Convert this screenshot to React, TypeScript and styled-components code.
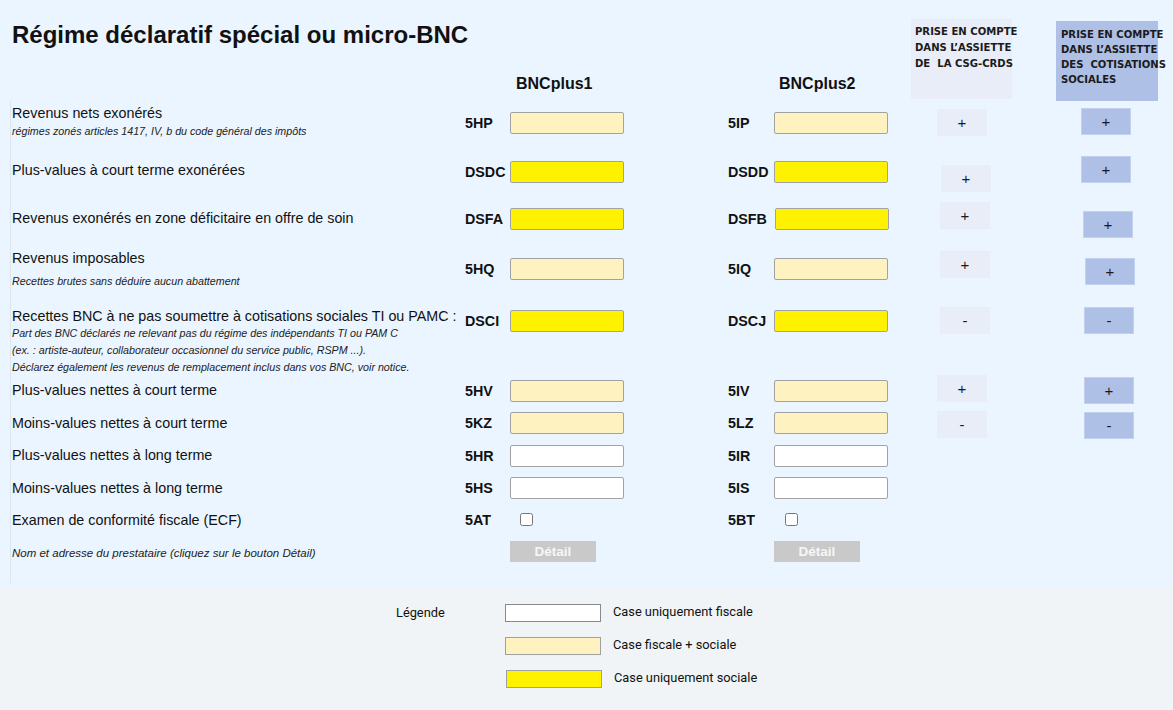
import React from 'react'
import styled, { createGlobalStyle } from 'styled-components'

type Kind = 'f' | 'fs' | 's'
type Tone = 'csg' | 'soc'

const COLS = '453px 45px 116px 102px 46px 116px 21px 101px 44px 102px'

const fill: Record<Kind, string> = { f: '#ffffff', fs: '#fff2c1', s: '#fff200' }
const tone: Record<Tone, { bg: string; edge: string }> = {
  csg: { bg: '#e8edf8', edge: '#e8edf8' },
  soc: { bg: '#aec0e6', edge: '#c3d0ee' },
}

const GlobalStyle = createGlobalStyle`
  body {
    margin: 0;
    background: #f0f4f6;
    font-family: 'Liberation Sans', Arial, sans-serif;
    color: #111;
  }
`

const Page = styled.div`
  width: 1173px;
  height: 710px;
  display: flex;
  flex-direction: column;
  overflow: hidden;
`

const Panel = styled.section`
  background: #ebf5ff;
  padding: 0 0 5px 10px;
`

const Header = styled.div`
  display: grid;
  grid-template-columns: ${COLS};
  grid-template-rows: 49px 52px;
  padding-left: 2px;
`

const Title = styled.h1`
  grid-column: 1 / 8;
  grid-row: 1;
  margin: 21px 0 0;
  font-size: 24px;
  line-height: 28px;
  font-weight: bold;
  white-space: nowrap;
`

const Year = styled.div<{ $col: string }>`
  grid-column: ${(p) => p.$col};
  grid-row: 2;
  margin-top: 25px;
  padding-left: 51px;
  font-size: 16px;
  line-height: 20px;
  font-weight: bold;
`

const ColumnHead = styled.div<{ $tone: Tone }>`
  grid-row: 1 / 3;
  grid-column: ${(p) => (p.$tone === 'csg' ? 8 : 10)};
  margin-top: ${(p) => (p.$tone === 'csg' ? 19 : 21)}px;
  height: 80px;
  box-sizing: border-box;
  padding: ${(p) => (p.$tone === 'csg' ? '5px 0 0 4px' : '6px 0 0 5px')};
  background: ${(p) => tone[p.$tone].bg};
  font-family: 'DejaVu Sans Condensed', 'Liberation Sans', sans-serif;
  font-weight: bold;
  font-size: 11.2px;
  line-height: ${(p) => (p.$tone === 'csg' ? 16 : 15)}px;
  white-space: pre;
  color: #1b1b1b;
`

const Body = styled.div`
  border-left: 1px solid #dce6f1;
  padding: 3px 0 0 1px;
`

const Row = styled.div<{ $h: number }>`
  display: grid;
  grid-template-columns: ${COLS};
  grid-template-rows: ${(p) => p.$h}px;
  height: ${(p) => p.$h}px;
  align-items: start;

  & > * {
    grid-row: 1;
  }
`

const LabelCell = styled.div<{ $pad: number }>`
  grid-column: 1;
  padding-top: ${(p) => p.$pad}px;
  white-space: nowrap;
`

const Label = styled.div`
  font-size: 14.3px;
  line-height: 18px;
`

const Notes = styled.div<{ $lh: number; $mt: number }>`
  margin-top: ${(p) => p.$mt}px;
  font-size: 10.7px;
  font-style: italic;
  line-height: ${(p) => p.$lh}px;
  color: #222;
`

const Hint = styled.div`
  font-size: 11.5px;
  font-style: italic;
  line-height: 18px;
  color: #222;
`

const Code = styled.div<{ $col: number; $top: number }>`
  grid-column: ${(p) => p.$col};
  margin-top: ${(p) => p.$top}px;
  height: 22px;
  line-height: 22px;
  font-size: 14.3px;
  font-weight: bold;
`

const Field = styled.input<{ $kind: Kind; $col: number; $top: number; $dx?: number }>`
  grid-column: ${(p) => p.$col};
  margin: ${(p) => p.$top}px 0 0 ${(p) => p.$dx ?? 0}px;
  box-sizing: border-box;
  width: 114px;
  height: 22px;
  padding: 0 4px;
  border: 1px solid #a2a2a2;
  border-radius: 2px;
  background: ${(p) => fill[p.$kind]};
  font: 13px 'Liberation Sans', Arial, sans-serif;
  outline: none;
`

const Check = styled.input<{ $col: number; $left: number; $top: number }>`
  grid-column: ${(p) => p.$col};
  margin: ${(p) => p.$top}px 0 0 ${(p) => p.$left}px;
  width: 13px;
  height: 13px;
`

const DetailButton = styled.button<{ $col: number }>`
  grid-column: ${(p) => p.$col};
  width: 86px;
  height: 21px;
  padding: 0;
  border: none;
  background: #c9c9c9;
  color: #f6f6f6;
  font: bold 13.5px 'Liberation Sans', Arial, sans-serif;
`

const Toggle = styled.div<{ $tone: Tone; $dx: number; $dy: number }>`
  grid-column: ${(p) => (p.$tone === 'csg' ? 8 : 10)};
  margin: ${(p) => p.$dy}px 0 0 ${(p) => p.$dx}px;
  width: 50px;
  height: 27px;
  box-sizing: border-box;
  display: flex;
  align-items: center;
  justify-content: center;
  background: ${(p) => tone[p.$tone].bg};
  border: 1px solid ${(p) => tone[p.$tone].edge};
  font-size: 15px;
  color: #1a1a1a;
`

const Legend = styled.section`
  flex: 1;
  display: flex;
  align-items: flex-start;
  padding: 16px 0 0 396px;
  font-family: Roboto, 'Liberation Sans', sans-serif;
  font-size: 12.8px;
  color: #111;
`

const LegendTitle = styled.div`
  width: 109px;
  line-height: 17px;
`

const LegendList = styled.div`
  display: grid;
  row-gap: 15px;
`

const LegendItem = styled.div<{ $shift: number }>`
  display: flex;
  align-items: center;
  gap: 12px;
  height: 18px;
  padding-left: ${(p) => p.$shift}px;
  line-height: 16px;

  & > span {
    margin-top: -2px;
  }
`

const Swatch = styled.div<{ $kind: Kind }>`
  width: 96px;
  height: 18px;
  box-sizing: border-box;
  border: 1px solid ${(p) => (p.$kind === 'f' ? '#8a8a8a' : '#a0a0a0')};
  background: ${(p) => fill[p.$kind]};
`

interface Sign {
  s: string
  dx: number
  dy: number
}

interface Line {
  label?: string
  hint?: string
  notes?: string[]
  noteLh?: number
  noteMt?: number
  h: number
  pad: number
  at: number
  codes?: [string, string]
  kind?: Kind
  shift2?: number
  control?: 'field' | 'check' | 'detail'
  csg?: Sign
  soc?: Sign
}

const lines: Line[] = [
  {
    label: 'Revenus nets exonérés',
    notes: ['régimes zonés articles 1417, IV, b du code général des impôts'],
    noteLh: 18,
    h: 57, pad: 0, at: 8, codes: ['5HP', '5IP'], kind: 'fs',
    csg: { s: '+', dx: 26, dy: 5 }, soc: { s: '+', dx: 25, dy: 4 },
  },
  {
    label: 'Plus-values à court terme exonérées',
    h: 47, pad: 0, at: 0, codes: ['DSDC', 'DSDD'], kind: 's',
    csg: { s: '+', dx: 30, dy: 4 }, soc: { s: '+', dx: 25, dy: -5 },
  },
  {
    label: 'Revenus exonérés en zone déficitaire en offre de soin',
    h: 41, pad: 1, at: 0, codes: ['DSFA', 'DSFB'], kind: 's', shift2: 1,
    csg: { s: '+', dx: 29, dy: -6 }, soc: { s: '+', dx: 27, dy: 3 },
  },
  {
    label: 'Revenus imposables',
    notes: ['Recettes brutes sans déduire aucun abattement'],
    noteLh: 18, noteMt: 5,
    h: 58, pad: 0, at: 9, codes: ['5HQ', '5IQ'], kind: 'fs',
    csg: { s: '+', dx: 29, dy: 2 }, soc: { s: '+', dx: 29, dy: 9 },
  },
  {
    label: 'Recettes BNC à ne pas soumettre à cotisations sociales TI ou PAMC :',
    notes: [
      'Part des BNC déclarés ne relevant pas du régime des indépendants TI ou PAM C',
      '(ex. : artiste-auteur, collaborateur occasionnel du service public, RSPM ...).',
      'Déclarez également les revenus de remplacement inclus dans vos BNC, voir notice.',
    ],
    noteLh: 17,
    h: 73, pad: 0, at: 3, codes: ['DSCI', 'DSCJ'], kind: 's',
    csg: { s: '-', dx: 29, dy: 0 }, soc: { s: '-', dx: 28, dy: 0 },
  },
  {
    label: 'Plus-values nettes à court terme',
    h: 32, pad: 1, at: 0, codes: ['5HV', '5IV'], kind: 'fs',
    csg: { s: '+', dx: 26, dy: -5 }, soc: { s: '+', dx: 28, dy: -3 },
  },
  {
    label: 'Moins-values nettes à court terme',
    h: 33, pad: 2, at: 0, codes: ['5KZ', '5LZ'], kind: 'fs',
    csg: { s: '-', dx: 26, dy: -1 }, soc: { s: '-', dx: 28, dy: 0 },
  },
  { label: 'Plus-values nettes à long terme', h: 32, pad: 1, at: 0, codes: ['5HR', '5IR'], kind: 'f' },
  { label: 'Moins-values nettes à long terme', h: 32, pad: 2, at: 0, codes: ['5HS', '5IS'], kind: 'f' },
  { label: 'Examen de conformité fiscale (ECF)', h: 32, pad: 2, at: 0, codes: ['5AT', '5BT'], control: 'check' },
  { hint: 'Nom et adresse du prestataire (cliquez sur le bouton Détail)', h: 42, pad: 3, at: 0, control: 'detail' },
]

function FormLine({ line }: { line: Line }) {
  const control = line.control ?? 'field'
  return (
    <Row $h={line.h}>
      <LabelCell $pad={line.pad}>
        {line.label && <Label>{line.label}</Label>}
        {line.hint && <Hint>{line.hint}</Hint>}
        {line.notes && (
          <Notes $lh={line.noteLh ?? 17} $mt={line.noteMt ?? 0}>
            {line.notes.map((n) => (
              <div key={n}>{n}</div>
            ))}
          </Notes>
        )}
      </LabelCell>
      {line.codes &&
        line.codes.map((c, i) => (
          <Code key={c} $col={i === 0 ? 2 : 5} $top={line.at}>
            {c}
          </Code>
        ))}
      {control === 'field' &&
        [3, 6].map((col) => (
          <Field
            key={col}
            $col={col}
            $top={line.at}
            $dx={col === 6 ? line.shift2 : 0}
            $kind={line.kind ?? 'f'}
            type="text"
          />
        ))}
      {control === 'check' &&
        [3, 6].map((col) => (
          <Check key={col} type="checkbox" $col={col} $left={col === 3 ? 10 : 11} $top={4} />
        ))}
      {control === 'detail' &&
        [3, 6].map((col) => (
          <DetailButton key={col} $col={col} type="button">
            Détail
          </DetailButton>
        ))}
      {line.csg && (
        <Toggle $tone="csg" $dx={line.csg.dx} $dy={line.csg.dy}>
          {line.csg.s}
        </Toggle>
      )}
      {line.soc && (
        <Toggle $tone="soc" $dx={line.soc.dx} $dy={line.soc.dy}>
          {line.soc.s}
        </Toggle>
      )}
    </Row>
  )
}

const legend: { kind: Kind; text: string; shift: number }[] = [
  { kind: 'f', text: 'Case uniquement fiscale', shift: 0 },
  { kind: 'fs', text: 'Case fiscale + sociale', shift: 0 },
  { kind: 's', text: 'Case uniquement sociale', shift: 1 },
]

export default function App() {
  return (
    <Page>
      <GlobalStyle />
      <Panel>
        <Header>
          <Title>Régime déclaratif spécial ou micro-BNC</Title>
          <Year $col="2 / 4">BNCplus1</Year>
          <Year $col="5 / 7">BNCplus2</Year>
          <ColumnHead $tone="csg">{'PRISE EN COMPTE\nDANS L’ASSIETTE\nDE  LA CSG-CRDS'}</ColumnHead>
          <ColumnHead $tone="soc">{'PRISE EN COMPTE\nDANS L’ASSIETTE\nDES  COTISATIONS\nSOCIALES'}</ColumnHead>
        </Header>
        <Body>
          {lines.map((l, i) => (
            <FormLine key={i} line={l} />
          ))}
        </Body>
      </Panel>
      <Legend>
        <LegendTitle>Légende</LegendTitle>
        <LegendList>
          {legend.map((l) => (
            <LegendItem key={l.kind} $shift={l.shift}>
              <Swatch $kind={l.kind} />
              <span>{l.text}</span>
            </LegendItem>
          ))}
        </LegendList>
      </Legend>
    </Page>
  )
}
